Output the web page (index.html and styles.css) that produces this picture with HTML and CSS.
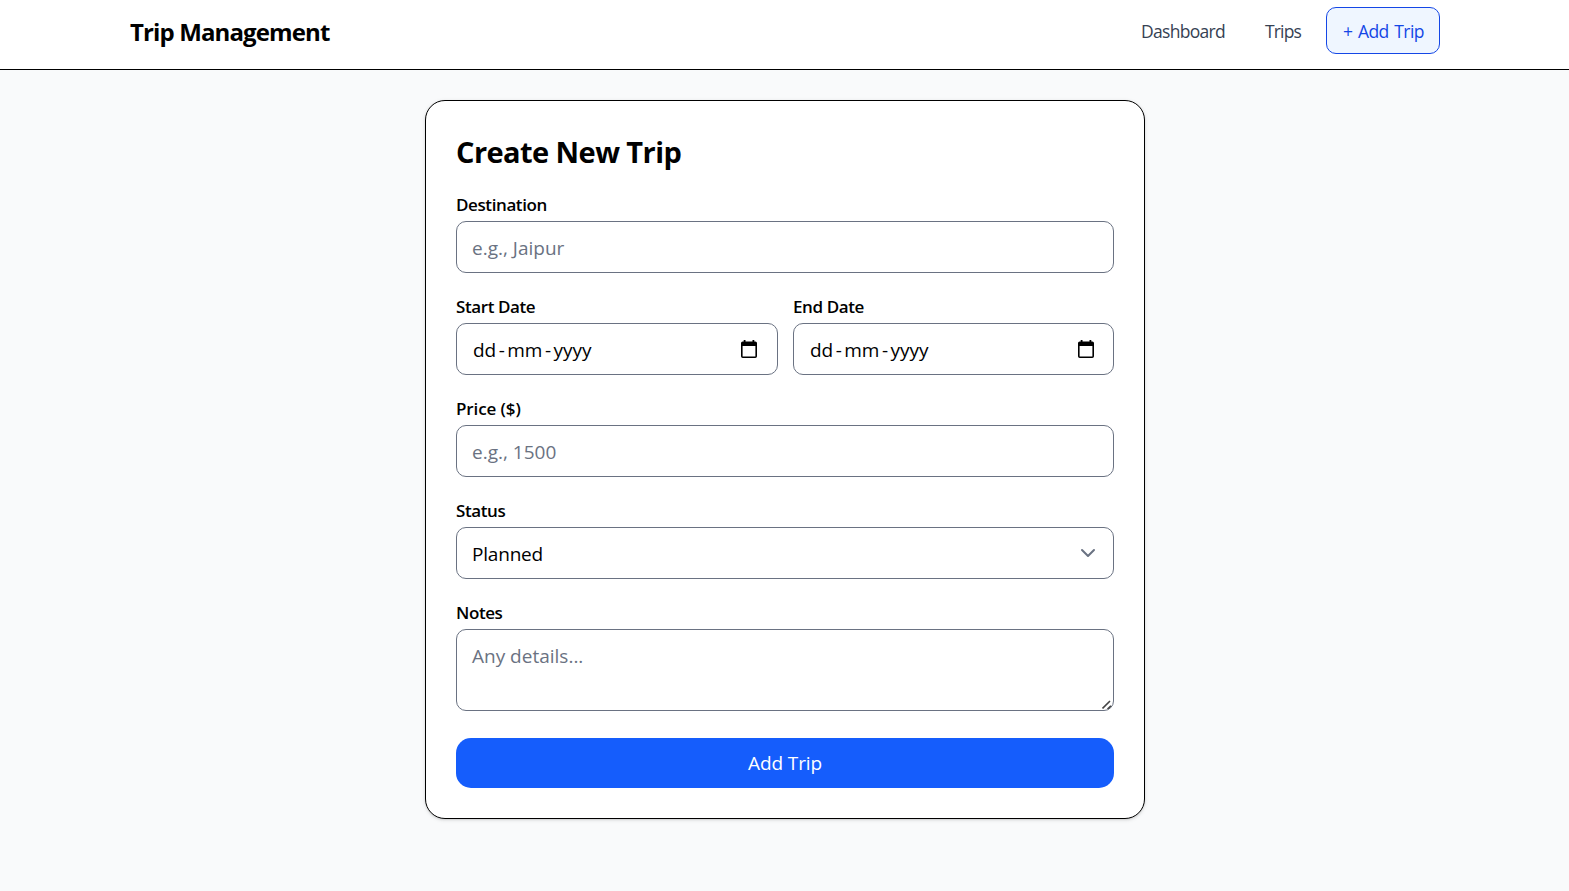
FILE: index.html
```html
<!DOCTYPE html>
<html lang="en">
<head>
<meta charset="utf-8">
<title>Trip Management</title>
<link rel="stylesheet" href="styles.css">
</head>
<body>
<header class="header">
  <div class="brand">Trip Management</div>
  <nav class="nav">
    <a class="link dashboard">Dashboard</a>
    <a class="link trips">Trips</a>
    <a class="link add">+ Add Trip</a>
  </nav>
</header>
<main class="main">
  <form class="card">
    <h1 class="title">Create New Trip</h1>
    <div class="field">
      <label class="label">Destination</label>
      <input class="control" type="text" placeholder="e.g., Jaipur">
    </div>
    <div class="row">
      <div class="field">
        <label class="label">Start Date</label>
        <div class="control date"><span class="mask"><span>dd</span><span class="sep">-</span><span>mm</span><span class="sep">-</span><span>yyyy</span></span>
          <svg class="calendar" viewBox="0 0 18 20"><path class="frame" d="M1.8 6v11.2a1 1 0 0 0 1 1h12.4a1 1 0 0 0 1-1V6"/><path d="M3.7 1h1.8v1.4h7V1h1.8v1.4h1a1.7 1.7 0 0 1 1.7 1.7V7H1V4.1a1.7 1.7 0 0 1 1.7-1.7h1z"/></svg>
        </div>
      </div>
      <div class="field">
        <label class="label">End Date</label>
        <div class="control date"><span class="mask"><span>dd</span><span class="sep">-</span><span>mm</span><span class="sep">-</span><span>yyyy</span></span>
          <svg class="calendar" viewBox="0 0 18 20"><path class="frame" d="M1.8 6v11.2a1 1 0 0 0 1 1h12.4a1 1 0 0 0 1-1V6"/><path d="M3.7 1h1.8v1.4h7V1h1.8v1.4h1a1.7 1.7 0 0 1 1.7 1.7V7H1V4.1a1.7 1.7 0 0 1 1.7-1.7h1z"/></svg>
        </div>
      </div>
    </div>
    <div class="field">
      <label class="label price">Price ($)</label>
      <input class="control" type="text" placeholder="e.g., 1500">
    </div>
    <div class="field">
      <label class="label">Status</label>
      <div class="control select"><span>Planned</span>
        <svg class="chevron" viewBox="0 0 16 10"><path d="M2 2l6 6 6-6"/></svg>
      </div>
    </div>
    <div class="field notes-field">
      <label class="label">Notes</label>
      <textarea class="control notes" placeholder="Any details..."></textarea>
      <svg class="grip" viewBox="0 0 10 10"><path d="M0.500 8.500L8 1M5.500 9L9 5.800"/></svg>
    </div>
    <button class="submit" type="button">Add Trip</button>
  </form>
</main>
</body>
</html>
```
FILE: styles.css
```css
* { box-sizing: border-box; }
body {
  margin: 0;
  min-height: 891px;
  background: #f9fafb;
  color: #000;
  font-family: "Open Sans", "Noto Sans", sans-serif;
}
.header {
  display: flex;
  justify-content: space-between;
  align-items: flex-start;
  height: 70px;
  padding: 7px 129px 0 130px;
  background: #fff;
  border-bottom: 1px solid #000;
}
.brand { font-size: 24px; line-height: 49px; font-weight: 700; letter-spacing: -0.88px; }
.nav { display: flex; gap: 8px; }
.link {
  height: 47px;
  padding: 0 16px;
  border: 1px solid transparent;
  border-radius: 10px;
  font-size: 17.5px;
  line-height: 47px;
  color: #364153;
  white-space: nowrap;
}
.dashboard { width: 116px; letter-spacing: -0.7px; }
.trips { width: 70px; letter-spacing: -0.85px; }
.add { width: 114px; color: #1447e6; background: #eff6ff; border-color: #1447e6; letter-spacing: -0.55px; word-spacing: 1.5px; }
.main { display: flex; justify-content: center; padding: 30px 0 0 1px; }
.card {
  display: flex;
  flex-direction: column;
  gap: 20px;
  width: 720px;
  height: 719px;
  padding: 30px;
  background: #fff;
  border: 1px solid #000;
  border-radius: 20px;
  box-shadow: 0 1px 4px rgba(0, 0, 0, 0.1), 0 1px 2px rgba(0, 0, 0, 0.1);
}
.title { margin: 0 0 -10px; height: 50px; font-size: 29px; line-height: 42px; font-weight: 700; letter-spacing: -0.57px; white-space: nowrap; }
.field { display: flex; flex-direction: column; }
.row { display: grid; grid-template-columns: 322px 321px; gap: 15px; }
.label { height: 30px; font-size: 17px; line-height: 27px; font-weight: 600; letter-spacing: -0.4px; white-space: nowrap; }
.price { letter-spacing: -0.1px; }
.control {
  display: flex;
  justify-content: space-between;
  align-items: center;
  width: 100%;
  height: 52px;
  padding: 2px 15px 0;
  border: 1px solid #6a7282;
  border-radius: 10px;
  background: #fff;
  color: #000;
  font-family: inherit;
  font-size: 19px;
  outline: none;
}
.control::placeholder { color: #6a7282; opacity: 1; }
.date { padding: 0 19px 0 16px; }
.row .field:last-child .date { padding-right: 18px; }
.mask { display: flex; padding-top: 2px; }
.sep { width: 11px; text-align: center; }
.calendar { width: 18px; height: 20px; }
.frame { fill: none; stroke: #000; stroke-width: 1.6; }
.select { padding-right: 17px; letter-spacing: -0.2px; }
.chevron { width: 16px; height: 10px; margin-top: -2px; fill: none; stroke: #6a7282; stroke-width: 2; stroke-linecap: round; stroke-linejoin: round; }
.notes-field { position: relative; }
.notes { display: block; height: 82px; padding: 11px 15px; line-height: 30px; resize: none; }
.grip { position: absolute; right: 2px; bottom: 1px; width: 10px; height: 10px; fill: none; stroke: #444; stroke-width: 1.6; }
.submit {
  height: 50px;
  margin-top: 7px;
  padding: 0;
  border: 0;
  border-radius: 15px;
  background: #155dfc;
  color: #fff;
  font-family: inherit;
  font-size: 19px;
  letter-spacing: -0.1px;
}
```
